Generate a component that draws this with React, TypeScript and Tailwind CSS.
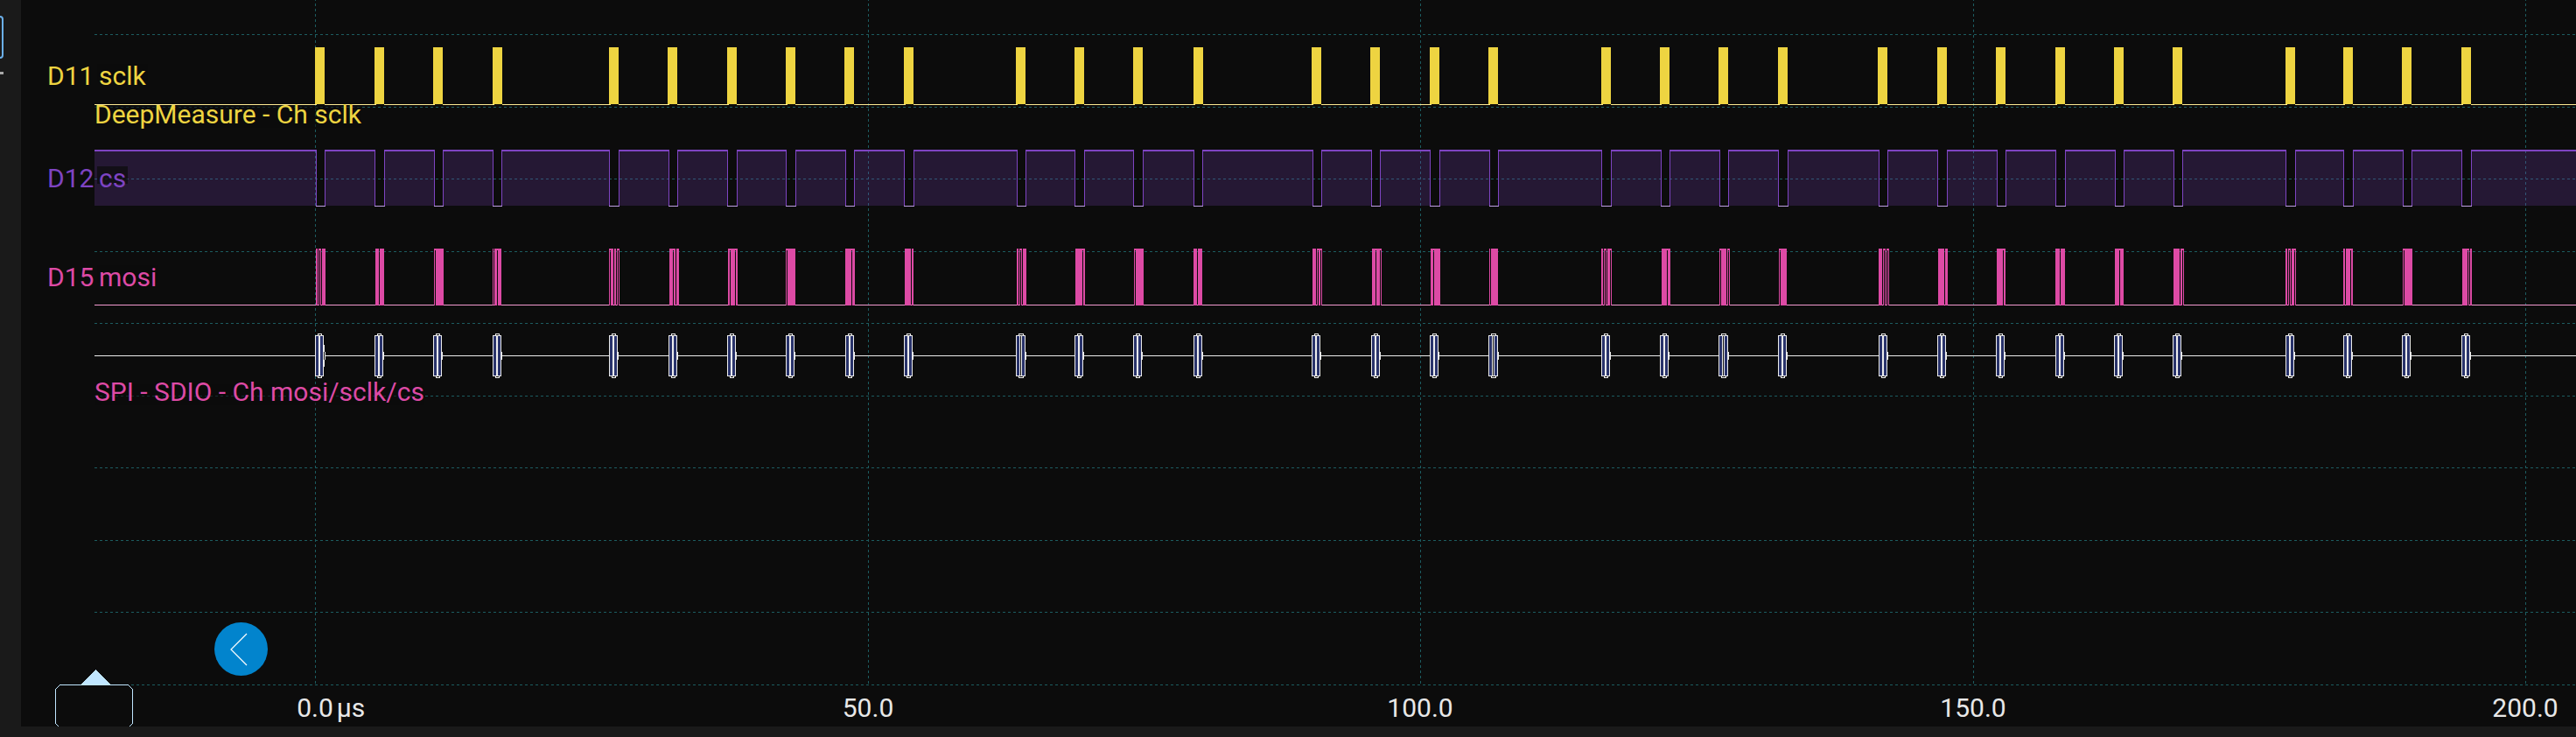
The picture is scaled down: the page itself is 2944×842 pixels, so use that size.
type Frame = {
  clock: number;
  select: [number, number];
  data: number;
  bits: string;
  decoded: number;
  split?: boolean;
};

// x positions on the time canvas. In `bits`: "#" is a toggling column,
// "_" a column resting low, "^" a column resting high.
const frames: Frame[] = [
  { clock: 360, select: [361, 372], data: 361, bits: "##_#^#_####", decoded: 360 },
  { clock: 428, select: [428, 440], data: 429, bits: "####_#####", decoded: 428 },
  { clock: 495, select: [496, 507], data: 496, bits: "#^#########", decoded: 495 },
  { clock: 563, select: [563, 574], data: 563, bits: "#_###^####", decoded: 563 },
  { clock: 696, select: [696, 708], data: 696, bits: "#^###_##_#^#", decoded: 696 },
  { clock: 763, select: [764, 775], data: 765, bits: "####^##_###", decoded: 764 },
  { clock: 831, select: [831, 843], data: 832, bits: "##^#####^##", decoded: 831 },
  { clock: 898, select: [898, 910], data: 898, bits: "#^#########", decoded: 898 },
  { clock: 965, select: [966, 977], data: 966, bits: "#######^###", decoded: 966 },
  { clock: 1033, select: [1033, 1045], data: 1034, bits: "#######_##", decoded: 1033 },
  { clock: 1161, select: [1162, 1173], data: 1162, bits: "##_#^#_####", decoded: 1161, split: true },
  { clock: 1228, select: [1228, 1240], data: 1229, bits: "########^##", decoded: 1228 },
  { clock: 1295, select: [1295, 1307], data: 1296, bits: "#^#########", decoded: 1295 },
  { clock: 1364, select: [1364, 1375], data: 1364, bits: "####_#####", decoded: 1364 },
  { clock: 1499, select: [1500, 1511], data: 1500, bits: "####_#^##^#", decoded: 1499 },
  { clock: 1566, select: [1567, 1578], data: 1568, bits: "####^####^#", decoded: 1567 },
  { clock: 1634, select: [1634, 1646], data: 1635, bits: "###^#######", decoded: 1634 },
  { clock: 1701, select: [1702, 1713], data: 1702, bits: "#_########", decoded: 1701, split: true },
  { clock: 1830, select: [1830, 1842], data: 1830, bits: "##_#^#_###^#", decoded: 1830 },
  { clock: 1897, select: [1898, 1909], data: 1899, bits: "######^###", decoded: 1897 },
  { clock: 1964, select: [1965, 1976], data: 1965, bits: "#^######_#^#", decoded: 1964, split: true },
  { clock: 2032, select: [2032, 2044], data: 2033, bits: "#^#######", decoded: 2032 },
  { clock: 2146, select: [2147, 2158], data: 2147, bits: "####_#^#_#^#", decoded: 2147 },
  { clock: 2214, select: [2214, 2226], data: 2215, bits: "#######_###", decoded: 2214 },
  { clock: 2281, select: [2282, 2293], data: 2282, bits: "#######^##", decoded: 2281 },
  { clock: 2349, select: [2349, 2361], data: 2349, bits: "#####_#####", decoded: 2349 },
  { clock: 2416, select: [2417, 2428], data: 2417, bits: "#####^####", decoded: 2416 },
  { clock: 2483, select: [2484, 2495], data: 2484, bits: "#######_##^#", decoded: 2483 },
  { clock: 2612, select: [2612, 2624], data: 2612, bits: "##_#^#_###^#", decoded: 2612 },
  { clock: 2678, select: [2678, 2690], data: 2678, bits: "##_#####^##", decoded: 2678 },
  { clock: 2745, select: [2746, 2757], data: 2746, bits: "#^#########", decoded: 2745 },
  { clock: 2813, select: [2813, 2825], data: 2814, bits: "######^#_##", decoded: 2813 },
];

const PLOT_LEFT = 108;
const PLOT_RIGHT = 8000;
const MARGIN = 24;

const rows = [39, 122, 204, 287, 369, 452, 534, 617, 699, 782];
const ticks = [
  { x: 360, label: "0.0", unit: "µs" },
  { x: 992, label: "50.0" },
  { x: 1623, label: "100.0" },
  { x: 2255, label: "150.0" },
  { x: 2886, label: "200.0" },
];

// Spans left over between consecutive [start, end] intervals.
function between(intervals: [number, number][]): [number, number][] {
  const spans: [number, number][] = [];
  let from = PLOT_LEFT;
  for (const [start, end] of intervals) {
    spans.push([from, start]);
    from = end;
  }
  spans.push([from, PLOT_RIGHT]);
  return spans;
}

function Grid() {
  return (
    <g stroke="#1c5c60" strokeWidth="1" strokeDasharray="3 3">
      {rows.map((y) => (
        <line key={y} x1={PLOT_LEFT} x2={PLOT_RIGHT} y1={y + 0.5} y2={y + 0.5} />
      ))}
      {ticks.map((t) => (
        <line key={t.x} x1={t.x + 0.5} x2={t.x + 0.5} y1="-2" y2="782" />
      ))}
    </g>
  );
}

function ClockTrace() {
  return (
    <g>
      {between(frames.map((f) => [f.clock + 2, f.clock + 11])).map(([a, b]) => (
        <rect key={a} x={a} y="119" width={b - a} height="1" fill="#fdea93" />
      ))}
      {frames.map((f) => (
        <rect key={f.clock} x={f.clock} y="54" width="11" height="65" fill="#eed441" />
      ))}
    </g>
  );
}

function SelectTrace() {
  return (
    <g>
      {between(frames.map((f) => [f.select[0] + 1, f.select[1] - 1])).map(([a, b]) => (
        <g key={a}>
          <rect x={a} y="171" width={b - a} height="64" fill="#7e44c2" fillOpacity="0.22" />
          <rect x={a} y="171" width={b - a} height="2" fill="#7e44c2" />
        </g>
      ))}
      {frames.map(({ select: [a, b] }) => (
        <g key={a}>
          <rect x={a} y="171" width="1" height="64" fill="#7e44c2" />
          <rect x={b - 1} y="171" width="1" height="65" fill="#7e44c2" />
          <rect x={a} y="235" width={b - a} height="1" fill="#bfa0e2" />
        </g>
      ))}
    </g>
  );
}

function DataTrace() {
  return (
    <g>
      {between(frames.map((f) => [f.data, f.data + f.bits.length])).map(([a, b]) => (
        <rect key={a} x={a} y="348" width={b - a} height="1" fill="#f49bd0" />
      ))}
      {frames.map((f) =>
        f.bits.split("").map((bit, i) => {
          const x = f.data + i;
          if (bit === "_") return <rect key={x} x={x} y="348" width="1" height="1" fill="#f49bd0" />;
          return <rect key={x} x={x} y="284" width="1" height={bit === "^" ? 2 : 65} fill="#dd4aa5" />;
        }),
      )}
    </g>
  );
}

function DecodedTrace() {
  return (
    <g>
      {between(frames.map((f) => [f.decoded, f.decoded + 10])).map(([a, b]) => (
        <rect key={a} x={a} y="406" width={b - a} height="1" fill="#ececec" />
      ))}
      {frames.map(({ decoded: x, split }, i) => {
        const w = split ? 11 : 10;
        return (
          <g key={x}>
            <rect x={x} y="383" width={w} height="47" fill="#ececec" />
            <rect x={x + 1} y="384" width="3" height="45" fill="#29336b" />
            <rect x={x + w - 4} y="384" width="3" height="45" fill="#29336b" />
            {split && <rect x={x + 5} y="384" width="1" height="45" fill="#0c0c0c" />}
            <rect x={x + 3.5} y="381.5" width={w - 6} height="2" fill="none" stroke="#ececec" />
            <rect x={x + 3.5} y="429.5" width={w - 6} height="2" fill="none" stroke="#ececec" />
            <rect x={x + w} y="402" width="1" height="9" fill="#ececec" />
            {i === 0 && (
              <>
                <rect x={x + w} y="394" width="1" height="8" fill="#ececec" />
                <rect x={x + w} y="402" width="1" height="9" fill="#0c0c0c" />
                <rect x={x + w} y="411" width="1" height="8" fill="#ececec" />
                <rect x={x + w + 1} y="402" width="1" height="9" fill="#ececec" />
              </>
            )}
          </g>
        );
      })}
    </g>
  );
}

function ChannelLabel({ pin, name, className }: { pin: string; name: string; className: string }) {
  return (
    <div className={`flex h-9 pl-[30px] leading-9 ${className}`}>
      <span className="w-[57px] shrink-0">{pin}</span>
      <span className="mt-1 h-5 bg-[#0c0c0c]/70 px-[2px] leading-7">{name}</span>
    </div>
  );
}

function AnalyzerLabel({ text, className }: { text: string; className: string }) {
  return (
    <div className={`flex h-9 pl-[84px] ${className}`}>
      <span className="mt-[9px] h-6 bg-[#0c0c0c]/60 leading-[18px]">{text}</span>
    </div>
  );
}

export default function App() {
  return (
    <div className="flex min-h-screen overflow-hidden bg-[#1a1a1a] pb-3 font-['Roboto',sans-serif] text-[30px] text-[#e8e8e8]">
      <aside className="flex w-6 shrink-0 flex-col pt-[18px]">
        <div className="h-[49px] w-1 rounded-r-lg border-2 border-l-0 border-[#6cb0ea]" />
        <div className="mt-[15px] h-[3px] w-1 bg-[#a8a8a8]" />
      </aside>
      <main className="relative flex min-w-0 flex-1 flex-col overflow-hidden bg-[#0c0c0c]">
        <svg className="absolute inset-0 h-full w-full" shapeRendering="crispEdges" aria-hidden="true">
          <g transform={`translate(${-MARGIN} 0)`}>
            <Grid />
            <ClockTrace />
            <SelectTrace />
            <DataTrace />
            <DecodedTrace />
          </g>
        </svg>

        <section className="relative flex flex-col whitespace-nowrap pt-[69px]">
          <ChannelLabel pin="D11" name="sclk" className="text-[#eed441]" />
          <AnalyzerLabel text="DeepMeasure - Ch sclk" className="mt-2 text-[#eed441]" />
          <ChannelLabel pin="D12" name="cs" className="mt-[37px] text-[#7e44c2]" />
          <ChannelLabel pin="D15" name="mosi" className="mt-[77px] text-[#dd4aa5]" />
          <AnalyzerLabel text="SPI - SDIO - Ch mosi/sclk/cs" className="mt-[95px] text-[#dd4aa5]" />
        </section>

        <div className="relative mt-auto flex pb-[10px] pl-[221px]">
          <button
            type="button"
            aria-label="Scroll to earlier samples"
            className="flex size-[61px] items-center justify-center rounded-full bg-[#0284cd]"
          >
            <svg className="size-10" viewBox="0 0 40 40" fill="none" stroke="#ffffff" strokeWidth="1.2">
              <path d="M26 2 L8 20 L26 38" />
            </svg>
          </button>
        </div>

        <footer className="relative h-12 shrink-0 leading-9">
          {ticks.map((t) => (
            <div key={t.x} className="absolute top-[9px] -translate-x-1/2" style={{ left: t.x - MARGIN }}>
              {t.label}
              {t.unit && <span className="absolute left-full pl-1">{t.unit}</span>}
            </div>
          ))}
          <svg
            className="absolute -top-[17px] left-[39px] h-[68px] w-[90px]"
            viewBox="0 0 90 68"
            fill="none"
            shapeRendering="crispEdges"
            aria-hidden="true"
          >
            <path d="M5.5 17.5 H83.5 L88.5 22.5 V61.5 L83.5 66.5 H5.5 L0.5 61.5 V22.5 Z" fill="#0c0c0c" stroke="#c0e6ff" />
            <path d="M46 0 L64 18 H28 Z" fill="#c0e6ff" />
          </svg>
        </footer>
      </main>
    </div>
  );
}
